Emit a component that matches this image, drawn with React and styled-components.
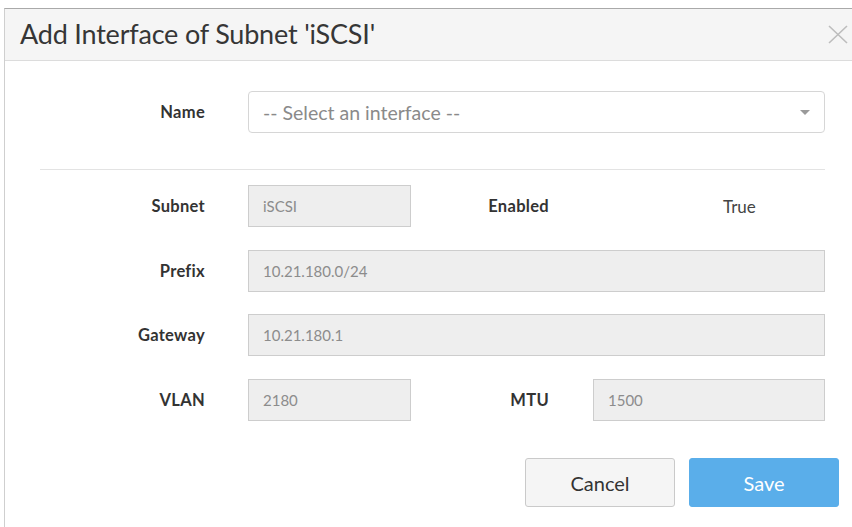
import React from "react";
import styled, { createGlobalStyle } from "styled-components";

const GlobalStyle = createGlobalStyle`
  html, body {
    margin: 0;
    padding: 0;
    background: #fff;
    overflow: hidden;
  }
  body {
    font-family: Lato, "Open Sans", Arial, sans-serif;
    color: #333;
  }
`;

const Modal = styled.div`
  margin: 8px 0 0 4px;
  width: 850px;
  height: 540px;
  box-sizing: border-box;
  border: 1px solid #cfcfcf;
  border-top-color: #a9a9a9;
  background: #fff;
`;

const Header = styled.div`
  display: flex;
  align-items: center;
  justify-content: space-between;
  height: 51px;
  padding: 0 5px 0 15px;
  background: #f5f5f5;
  border-bottom: 1px solid #dcdcdc;
`;

const Title = styled.h4`
  margin: 0 0 2px;
  font-size: 27px;
  font-weight: 400;
  color: #363636;
  letter-spacing: -0.2px;
`;

const Close = styled.button`
  display: flex;
  padding: 0;
  border: 0;
  background: none;
  cursor: pointer;
`;

const Body = styled.div`
  padding: 30px 28px 0 35px;
`;

const Row = styled.div`
  display: grid;
  grid-template-columns: 208px 163px 182px 1fr;
  align-items: center;
  height: 42px;
  margin-top: ${(p) => p.$gap || 0}px;
`;

const Label = styled.label`
  padding-right: ${(p) => p.$pad || 43}px;
  text-align: right;
  font-size: 16.5px;
  font-weight: 700;
  letter-spacing: 0.3px;
  color: #333;
`;

const Select = styled.div`
  grid-column: 2 / 5;
  display: flex;
  align-items: center;
  height: 42px;
  box-sizing: border-box;
  padding: 0 14px;
  border: 1px solid #d6d6d6;
  border-radius: 4px;
  font-size: 19.5px;
  color: #8a8a8a;
`;

const Caret = styled.span`
  margin-left: auto;
  width: 0;
  height: 0;
  border-left: 5px solid transparent;
  border-right: 5px solid transparent;
  border-top: 5px solid #9a9a9a;
`;

const Divider = styled.hr`
  margin: 36px 0 15px;
  border: 0;
  border-top: 1px solid #e3e3e3;
`;

const Field = styled.div`
  grid-column: ${(p) => (p.$wide ? "2 / 5" : "auto")};
  display: flex;
  align-items: center;
  height: 42px;
  box-sizing: border-box;
  padding: 0 14px;
  background: #eee;
  border: 1px solid #cdcdcd;
  font-size: 15px;
  color: #8c8c8c;
`;

const Static = styled.span`
  padding-left: 130px;
  font-size: 17px;
  color: #444;
`;

const Footer = styled.div`
  display: flex;
  justify-content: flex-end;
  gap: 14px;
  padding: 37px 14px 0 0;
`;

const Button = styled.button`
  width: 150px;
  height: 49px;
  border-radius: 3px;
  font-family: inherit;
  font-size: 20px;
  cursor: pointer;
  border: 1px solid ${(p) => (p.$primary ? "#5aaeea" : "#cacaca")};
  background: ${(p) => (p.$primary ? "#5aaeea" : "#f5f5f5")};
  color: ${(p) => (p.$primary ? "#fff" : "#333")};
`;

const CloseIcon = () => (
  <svg width="20" height="19" viewBox="0 0 20 19">
    <path d="M1 1 L19 18 M19 1 L1 18" stroke="#bdbdbd" strokeWidth="1.6" fill="none" />
  </svg>
);

export default function App() {
  return (
    <>
      <GlobalStyle />
      <Modal>
        <Header>
          <Title>Add Interface of Subnet 'iSCSI'</Title>
          <Close aria-label="Close">
            <CloseIcon />
          </Close>
        </Header>
        <Body>
          <Row>
            <Label>Name</Label>
            <Select>
              -- Select an interface --
              <Caret />
            </Select>
          </Row>
          <Divider />
          <Row>
            <Label>Subnet</Label>
            <Field>iSCSI</Field>
            <Label $pad={44}>Enabled</Label>
            <Static>True</Static>
          </Row>
          <Row $gap={23}>
            <Label>Prefix</Label>
            <Field $wide>10.21.180.0/24</Field>
          </Row>
          <Row $gap={22}>
            <Label>Gateway</Label>
            <Field $wide>10.21.180.1</Field>
          </Row>
          <Row $gap={23}>
            <Label>VLAN</Label>
            <Field>2180</Field>
            <Label $pad={44}>MTU</Label>
            <Field>1500</Field>
          </Row>
        </Body>
        <Footer>
          <Button>Cancel</Button>
          <Button $primary>Save</Button>
        </Footer>
      </Modal>
    </>
  );
}
